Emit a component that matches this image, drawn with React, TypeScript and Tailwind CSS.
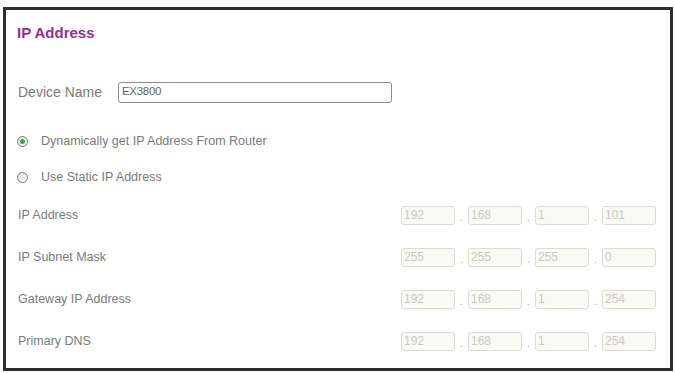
import React from "react";

const rows: { label: string; parts: string[] }[] = [
  { label: "IP Address", parts: ["192", "168", "1", "101"] },
  { label: "IP Subnet Mask", parts: ["255", "255", "255", "0"] },
  { label: "Gateway IP Address", parts: ["192", "168", "1", "254"] },
  { label: "Primary DNS", parts: ["192", "168", "1", "254"] },
];

function Radio({ checked }: { checked?: boolean }) {
  return (
    <span className="flex h-[11px] w-[11px] items-center justify-center rounded-full border border-[#7d7d7d] bg-gradient-to-br from-[#d9d9d9] to-[#ffffff]">
      {checked && <span className="h-[5px] w-[5px] rounded-full bg-[#3fa34d]" />}
    </span>
  );
}

function IpBox({ value }: { value: string }) {
  return (
    <div className="flex h-[19px] w-[54px] items-center rounded-[3px] border border-[#dcdcd6] bg-[#f9f9f5] pl-[2px] text-[12px] text-[#c9c9c4]">
      {value}
    </div>
  );
}

export default function App() {
  return (
    <div className="h-[373px] w-[675px] bg-white pl-[3px] pt-[7px] font-['Liberation_Sans',Arial,sans-serif]">
      <div className="flex h-[364px] w-[670px] flex-col border-[3px] border-[#2e2e2e] pl-[11px] pr-[14px]">
        <div className="mt-[11px] flex h-[24px] items-center text-[15px] font-bold text-[#93308f]">
          IP Address
        </div>

        <div className="mt-[35px] flex h-[24px] items-center">
          <span className="w-[101px] pl-[1px] text-[14px] text-[#7a7a7a]">Device Name</span>
          <div className="flex h-[21px] w-[274px] items-center rounded-[3px] border border-[#8c8c8c] pl-[3px] text-[11.5px] tracking-[-0.3px] text-[#666]">
            EX3800
          </div>
        </div>

        <div className="mt-[25px] flex h-[24px] items-center gap-[13px] text-[12.5px] text-[#7a7a7a]">
          <Radio checked />
          <span>Dynamically get IP Address From Router</span>
        </div>

        <div className="mt-[12px] flex h-[24px] items-center gap-[13px] text-[12.5px] text-[#7a7a7a]">
          <Radio />
          <span>Use Static IP Address</span>
        </div>

        {rows.map((r, i) => (
          <div
            key={r.label}
            className={`flex h-[24px] items-center justify-between ${i === 0 ? "mt-[14px]" : "mt-[18px]"}`}
          >
            <span className="pl-[1px] text-[12.5px] text-[#7a7a7a]">{r.label}</span>
            <div className="flex items-center">
              {r.parts.map((p, j) => (
                <React.Fragment key={j}>
                  {j > 0 && (
                    <span className="flex w-[13px] items-end justify-center pt-[6px] text-[10px] leading-none text-[#9a9a9a]">
                      .
                    </span>
                  )}
                  <IpBox value={p} />
                </React.Fragment>
              ))}
            </div>
          </div>
        ))}
      </div>
    </div>
  );
}
